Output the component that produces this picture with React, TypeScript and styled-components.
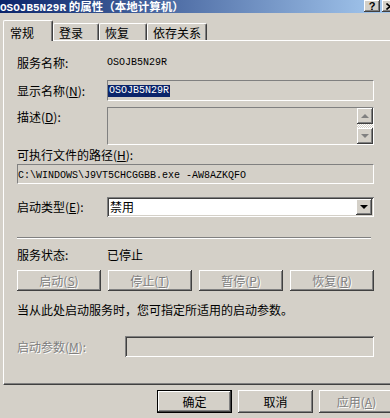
import React from "react";
import styled, { createGlobalStyle, css } from "styled-components";

const GlobalStyle = createGlobalStyle`
  html, body {
    margin: 0;
    padding: 0;
    background: #d4d0c8;
    overflow: hidden;
  }
  body {
    font-family: "Noto Sans CJK SC", "Liberation Sans", sans-serif;
    font-size: 12px;
    line-height: 14px;
    color: #000;
  }
`;

const raised = css`
  background: #d4d0c8;
  box-shadow: inset -1px -1px #404040, inset 1px 1px #ffffff,
    inset -2px -2px #808080, inset 2px 2px #d4d0c8;
`;

const sunken = css`
  box-shadow: inset 1px 1px #808080, inset -1px -1px #ffffff,
    inset 2px 2px #404040, inset -2px -2px #d4d0c8;
`;

const edge = css`
  border: 1px solid;
  border-color: #808080 #ffffff #ffffff #808080;
`;

const greyed = css`
  color: #808080;
  text-shadow: 1px 1px 0 #ffffff;
`;

const Window = styled.div`
  width: 390px;
  height: 418px;
  overflow: hidden;
  background: #d4d0c8;
  display: flex;
  flex-direction: column;
  align-items: flex-start;
`;

const TitleBar = styled.div`
  width: 390px;
  height: 13px;
  flex-shrink: 0;
  display: flex;
  align-items: center;
  justify-content: space-between;
  background: linear-gradient(to right, #0a246a, #a6caf0);
`;

const TitleText = styled.div`
  color: #fff;
  font-weight: bold;
  font-size: 11.5px;
  line-height: 12px;
  white-space: nowrap;
`;

const TitleLatin = styled.span`
  font-family: "Liberation Mono", monospace;
  font-size: 11px;
`;

const CapButtons = styled.div`
  display: flex;
  align-self: flex-start;
  gap: 2px;
  margin-right: -8px;
`;

const CapButton = styled.div`
  ${raised};
  width: 16px;
  height: 12px;
  display: flex;
  align-items: center;
  justify-content: center;
  font-family: "Liberation Sans", sans-serif;
  font-weight: bold;
  font-size: 11px;
  line-height: 12px;
`;

const TabStrip = styled.div`
  height: 27px;
  flex-shrink: 0;
  display: flex;
  align-items: flex-end;
  padding-left: 3px;
  position: relative;
  z-index: 1;
`;

const Tab = styled.div<{ $active?: boolean; $w: number }>`
  box-sizing: border-box;
  width: ${(p) => p.$w}px;
  height: ${(p) => (p.$active ? 21 : 17)}px;
  margin-bottom: ${(p) => (p.$active ? -1 : 0)}px;
  padding: ${(p) => (p.$active ? "5px 0 0 6px" : "2px 0 0 5px")};
  background: #d4d0c8;
  border-top: 1px solid #fff;
  border-left: 1px solid #fff;
  border-right: 1px solid #404040;
  border-radius: 2px 2px 0 0;
  box-shadow: inset -1px 0 #808080;
  white-space: nowrap;
`;

const Panel = styled.div`
  box-sizing: border-box;
  width: 400px;
  height: 345px;
  flex-shrink: 0;
  margin-left: 3px;
  padding-left: 13px;
  border-top: 1px solid #fff;
  border-left: 1px solid #fff;
  border-bottom: 1px solid #404040;
  box-shadow: inset 0 -1px #808080;
  display: flex;
  flex-direction: column;
`;

const Content = styled.div`
  width: 357px;
  display: flex;
  flex-direction: column;
`;

const FieldRow = styled.div<{ $labelW?: number; $top: number; $start?: boolean }>`
  display: grid;
  grid-template-columns: ${(p) => p.$labelW ?? 90}px 1fr;
  align-items: ${(p) => (p.$start ? "start" : "center")};
  margin-top: ${(p) => p.$top}px;
`;

const Label = styled.div<{ $disabled?: boolean; $top?: number }>`
  white-space: nowrap;
  padding-top: ${(p) => p.$top ?? 0}px;
  ${(p) => p.$disabled && greyed};
`;

const Text = styled.div<{ $top: number }>`
  margin-top: ${(p) => p.$top}px;
  white-space: nowrap;
`;

const Mono = styled.span`
  font-family: "Liberation Mono", monospace;
  font-size: 10px;
`;

const EdgeBox = styled.div<{ $h: number; $top?: number }>`
  ${edge};
  box-sizing: border-box;
  height: ${(p) => p.$h}px;
  margin-top: ${(p) => p.$top ?? 0}px;
  background: #d4d0c8;
  display: flex;
  overflow: hidden;
`;

const Selected = styled.span`
  display: inline-block;
  height: 12px;
  line-height: 12px;
  padding: 0 1px;
  background: #0a246a;
  color: #fff;
  font-family: "Liberation Mono", monospace;
  font-size: 10px;
`;

const PathText = styled.div`
  line-height: 16px;
  white-space: nowrap;
`;

const Scroll = styled.div`
  margin-left: auto;
  width: 16px;
  display: flex;
  flex-direction: column;
`;

const ScrollBtn = styled.div`
  ${raised};
  width: 16px;
  height: 16px;
  flex-shrink: 0;
  display: flex;
  align-items: center;
  justify-content: center;
`;

const Track = styled.div`
  flex: 1;
  background: repeating-conic-gradient(#ffffff 0 25%, #d4d0c8 0 50%) 0 0 / 2px 2px;
`;

const Arrow = styled.div<{ $up?: boolean; $color: string }>`
  width: 0;
  height: 0;
  border-left: 4px solid transparent;
  border-right: 4px solid transparent;
  ${(p) =>
    p.$up
      ? css`border-bottom: 4px solid ${p.$color};`
      : css`border-top: 4px solid ${p.$color};`}
`;

const Combo = styled.div`
  ${sunken};
  box-sizing: border-box;
  height: 20px;
  padding: 2px;
  background: #fff;
  display: flex;
  align-items: center;
`;

const ComboText = styled.div`
  flex: 1;
  padding-left: 1px;
`;

const ComboBtn = styled.div`
  ${raised};
  width: 16px;
  height: 16px;
  display: flex;
  align-items: center;
  justify-content: center;
`;

const Separator = styled.div`
  margin-top: 20px;
  margin-right: 3px;
  border-top: 1px solid #808080;
  border-bottom: 1px solid #fff;
`;

const ButtonRow = styled.div`
  margin-top: 8px;
  display: grid;
  grid-template-columns: repeat(4, 84px);
  justify-content: space-between;
`;

const PushButton = styled.div<{ $disabled?: boolean; $default?: boolean; $h?: number }>`
  ${raised};
  box-sizing: border-box;
  height: ${(p) => p.$h ?? 21}px;
  display: flex;
  align-items: center;
  justify-content: center;
  white-space: nowrap;
  ${(p) => p.$disabled && greyed};
  ${(p) =>
    p.$default &&
    css`
      border: 1px solid #000;
    `}
`;

const ParamBox = styled.div`
  ${sunken};
  height: 21px;
  background: #d4d0c8;
`;

const Footer = styled.div`
  margin-top: 5px;
  padding-left: 157px;
  display: grid;
  grid-template-columns: repeat(3, 75px);
  gap: 6px;
`;

export default function App() {
  return (
    <>
      <GlobalStyle />
      <Window>
        <TitleBar>
          <TitleText>
            <TitleLatin>OSOJB5N29R</TitleLatin> 的属性（本地计算机）
          </TitleText>
          <CapButtons>
            <CapButton>?</CapButton>
            <CapButton>
              <svg width="8" height="7" viewBox="0 0 8 7">
                <path d="M0.5 0.5 L7.5 6.5 M7.5 0.5 L0.5 6.5" stroke="#000" strokeWidth="1.6" />
              </svg>
            </CapButton>
          </CapButtons>
        </TitleBar>

        <TabStrip>
          <Tab $active $w={50}>常规</Tab>
          <Tab $w={46}>登录</Tab>
          <Tab $w={48}>恢复</Tab>
          <Tab $w={60}>依存关系</Tab>
        </TabStrip>

        <Panel>
          <Content>
            <FieldRow $top={15}>
              <Label>服务名称:</Label>
              <Mono>OSOJB5N29R</Mono>
            </FieldRow>

            <FieldRow $top={10}>
              <Label>
                显示名称(<u>N</u>):
              </Label>
              <EdgeBox $h={21}>
                <div>
                  <Selected>OSOJB5N29R</Selected>
                </div>
              </EdgeBox>
            </FieldRow>

            <FieldRow $top={6} $start>
              <Label $top={3}>
                描述(<u>D</u>):
              </Label>
              <EdgeBox $h={38}>
                <Scroll>
                  <ScrollBtn>
                    <Arrow $up $color="#808080" />
                  </ScrollBtn>
                  <Track />
                  <ScrollBtn>
                    <Arrow $color="#808080" />
                  </ScrollBtn>
                </Scroll>
              </EdgeBox>
            </FieldRow>

            <Text $top={3}>
              可执行文件的路径(<u>H</u>):
            </Text>
            <EdgeBox $h={20} $top={2}>
              <PathText>
                <Mono>C:\WINDOWS\J9VT5CHCGGBB.exe -AW8AZKQFO</Mono>
              </PathText>
            </EdgeBox>

            <FieldRow $top={13}>
              <Label>
                启动类型(<u>E</u>):
              </Label>
              <Combo>
                <ComboText>禁用</ComboText>
                <ComboBtn>
                  <Arrow $color="#000" />
                </ComboBtn>
              </Combo>
            </FieldRow>

            <Separator />

            <FieldRow $top={9}>
              <Label>服务状态:</Label>
              <div>已停止</div>
            </FieldRow>

            <ButtonRow>
              <PushButton $disabled>
                启动(<u>S</u>)
              </PushButton>
              <PushButton $disabled>
                停止(<u>T</u>)
              </PushButton>
              <PushButton $disabled>
                暂停(<u>P</u>)
              </PushButton>
              <PushButton $disabled>
                恢复(<u>R</u>)
              </PushButton>
            </ButtonRow>

            <Text $top={12}>当从此处启动服务时，您可指定所适用的启动参数。</Text>

            <FieldRow $top={19} $labelW={108}>
              <Label $disabled>
                启动参数(<u>M</u>):
              </Label>
              <ParamBox />
            </FieldRow>
          </Content>
        </Panel>

        <Footer>
          <PushButton $default $h={23}>确定</PushButton>
          <PushButton $h={23}>取消</PushButton>
          <PushButton $disabled $h={23}>
            应用(<u>A</u>)
          </PushButton>
        </Footer>
      </Window>
    </>
  );
}
